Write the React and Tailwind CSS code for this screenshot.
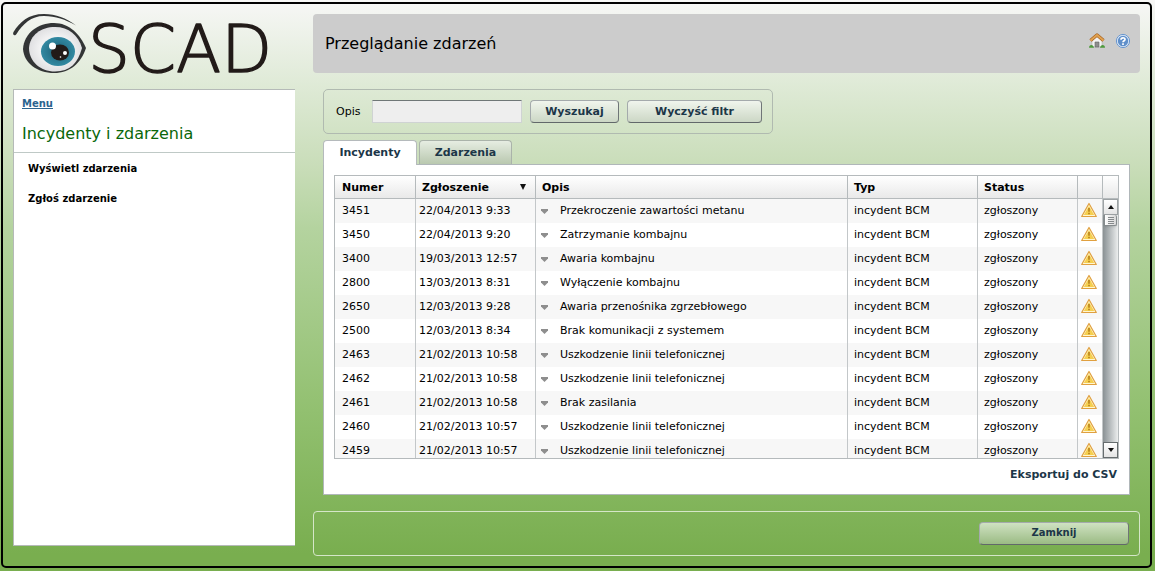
import { useState } from 'react'

const INCIDENTS = [
  { number: '3451', reported: '22/04/2013 9:33', description: 'Przekroczenie zawartości metanu' },
  { number: '3450', reported: '22/04/2013 9:20', description: 'Zatrzymanie kombajnu' },
  { number: '3400', reported: '19/03/2013 12:57', description: 'Awaria kombajnu' },
  { number: '2800', reported: '13/03/2013 8:31', description: 'Wyłączenie kombajnu' },
  { number: '2650', reported: '12/03/2013 9:28', description: 'Awaria przenośnika zgrzebłowego' },
  { number: '2500', reported: '12/03/2013 8:34', description: 'Brak komunikacji z systemem' },
  { number: '2463', reported: '21/02/2013 10:58', description: 'Uszkodzenie linii telefonicznej' },
  { number: '2462', reported: '21/02/2013 10:58', description: 'Uszkodzenie linii telefonicznej' },
  { number: '2461', reported: '21/02/2013 10:58', description: 'Brak zasilania' },
  { number: '2460', reported: '21/02/2013 10:57', description: 'Uszkodzenie linii telefonicznej' },
  { number: '2459', reported: '21/02/2013 10:57', description: 'Uszkodzenie linii telefonicznej' },
]

function Logo() {
  return (
    <svg className="block h-[75px] w-full overflow-visible" viewBox="0 0 282 75" role="img" aria-label="OSCAD">
      <defs>
        <radialGradient id="eyeball">
          <stop offset="0.6" stopColor="#f1f1f2" />
          <stop offset="1" stopColor="#e0e0e2" />
        </radialGradient>
        <radialGradient id="iris">
          <stop offset="0.4" stopColor="#256f86" />
          <stop offset="1" stopColor="#3289a2" />
        </radialGradient>
      </defs>
      <path
        d="M0.500 18C7 8 15 0 31 0C43 0 53 4 63 11.500C52 5.500 43 2 31 2C18 2 10 10 3.500 20C2 22.500 -1 21 0.500 18Z"
        fill="#333536"
      />
      <path
        d="M10 35C11 19 25 9 41 9C56 9 67 20 73 34C68 49 57 59 41 59C24 59 11 49 10 35Z"
        fill="#333536"
      />
      <path
        d="M16 34C17 21 28 13 42 13C56 13 65 21 69 34C65 49 57 57.500 42 57.500C27 57.500 16 47 16 34Z"
        fill="url(#eyeball)"
      />
      <ellipse cx="45" cy="37.500" rx="17" ry="14.500" fill="url(#iris)" />
      <ellipse cx="47" cy="38.500" rx="9" ry="8" fill="#221b19" />
      <circle cx="39.500" cy="32" r="3.500" fill="#fff" />
      <circle cx="52" cy="39" r="2" fill="#fff" />
      <circle cx="47.500" cy="43" r="0.800" fill="#fff" />
      <text
        x="75"
        y="58"
        fontSize="66"
        fill="#221b19"
        stroke="#221b19"
        strokeWidth="1.500"
        strokeLinejoin="round"
        className="font-['DejaVu_Sans',sans-serif] font-extralight"
      >
        SCAD
      </text>
    </svg>
  )
}

function HomeIcon() {
  return (
    <svg width="16" height="16" viewBox="0 0 16 16" aria-hidden="true">
      <path d="M3 7.500L8 3L13 7.500V14H3Z" fill="#f3f3f3" stroke="#aaa" strokeWidth="0.500" />
      <path d="M6 9H10V14H6Z" fill="#8d8d8d" stroke="#666" strokeWidth="0.600" />
      <path d="M1.500 7.500L8 2L14.500 7.500" fill="none" stroke="#a96420" strokeWidth="3.400" strokeLinejoin="round" />
      <path d="M1.500 7.500L8 2L14.500 7.500" fill="none" stroke="#e0a252" strokeWidth="2" strokeLinejoin="round" />
      <path d="M0 14.800C0 11 4.500 11 5 14.800Z" fill="#4f9a3e" />
      <path d="M11 14.800C11.500 11 16 11 16 14.800Z" fill="#4f9a3e" />
    </svg>
  )
}

function HelpIcon() {
  return (
    <svg width="16" height="16" viewBox="0 0 16 16" aria-hidden="true">
      <circle cx="8" cy="8" r="6.600" fill="#dce8f6" stroke="#6a97cf" />
      <circle cx="8" cy="8" r="5.200" fill="#5f8fca" />
      <path
        d="M6 6.700C6 4.200 10 4.200 10 6.400C10 7.700 8 7.800 8 9.300M8 10.300V12"
        fill="none"
        stroke="#fff"
        strokeWidth="1.700"
      />
    </svg>
  )
}

function WarningIcon() {
  return (
    <svg className="mb-[3px] block" width="16" height="16" viewBox="0 0 16 16" role="img" aria-label="Ostrzeżenie">
      <path d="M8 1.500L15.300 14.500H0.700Z" fill="#fff6d0" stroke="#e0a040" strokeWidth="1.200" strokeLinejoin="round" />
      <path d="M8 4L13.200 13H2.800Z" fill="#f5cf50" />
      <path d="M8 6V9.800M8 10.800V12.300" stroke="#b8801a" strokeWidth="1.600" />
    </svg>
  )
}

function Button({ className = '', ...props }) {
  return (
    <button
      type="button"
      className={`rounded-[4px] border border-[#a4aaac] border-r-[#6f7577] border-b-[#62686a] font-bold text-[#1c3648] ${className}`}
      {...props}
    />
  )
}

function Sidebar() {
  return (
    <aside className="flex w-[282px] shrink-0 flex-col pb-[10px]">
      <Logo />
      <nav className="flex-1 border border-r-0 border-[#b5bab8] bg-white">
        <a href="#menu" className="mt-2 ml-2 inline-block text-[10px] leading-3 font-bold text-[#2b648f] underline">
          Menu
        </a>
        <h2 className="mt-3 border-b border-[#bfc9c6] pb-2 pl-2 text-[16px] leading-5 text-[#0a670a]">
          Incydenty i zdarzenia
        </h2>
        <ul className="grid gap-4 pt-[9px] pl-[14px] text-[10px] leading-[14px] font-bold">
          <li>
            <a href="#wyswietl">Wyświetl zdarzenia</a>
          </li>
          <li>
            <a href="#zglos">Zgłoś zdarzenie</a>
          </li>
        </ul>
      </nav>
    </aside>
  )
}

function SearchForm() {
  const [query, setQuery] = useState('')

  return (
    <form
      className="flex w-fit items-center gap-2 rounded-[5px] border border-[#b0bab0] px-[10px] py-[10px]"
      onSubmit={(event) => event.preventDefault()}
    >
      <label htmlFor="description-filter" className="w-[30px] pl-[2px]">
        Opis
      </label>
      <input
        id="description-filter"
        type="text"
        value={query}
        onChange={(event) => setQuery(event.target.value)}
        className="h-[23px] w-[150px] border border-[#cfd3d3] border-t-[#6f7777] bg-[#eee] px-1 outline-none"
      />
      <Button type="submit" className="h-[23px] w-[89px] bg-linear-to-b from-[#f0f5ed] to-[#ccd7c5]">
        Wyszukaj
      </Button>
      <Button
        className="h-[23px] w-[135px] bg-linear-to-b from-[#f0f5ed] to-[#ccd7c5]"
        onClick={() => setQuery('')}
      >
        Wyczyść filtr
      </Button>
    </form>
  )
}

function Scrollbar() {
  return (
    <div className="flex w-[15px] shrink-0 flex-col">
      <div className="h-[23px] shrink-0 border-b border-[#b5babc] bg-linear-to-b from-white to-[#e8e8e8]" />
      <button
        type="button"
        aria-label="Przewiń w górę"
        className="grid h-4 shrink-0 place-items-center border border-[#9da2a4] bg-linear-to-b from-white to-[#e4e4e4]"
      >
        <svg width="6" height="4" viewBox="0 0 6 4">
          <path d="M3 0L6 4H0Z" fill="#111" />
        </svg>
      </button>
      <div className="flex-1 border-l border-[#8e9496] bg-linear-to-r from-[#90979a] to-[#eceeee]">
        <div className="grid h-[11px] w-[13px] place-items-center rounded-r-[2px] border border-t-0 border-[#858b8d] bg-linear-to-r from-white to-[#d8d8d8] shadow-sm">
          <svg width="6" height="7" viewBox="0 0 6 7">
            <path d="M0 0.500H6M0 2.500H6M0 4.500H6M0 6.500H6" stroke="#85898b" />
          </svg>
        </div>
      </div>
      <button
        type="button"
        aria-label="Przewiń w dół"
        className="grid h-4 shrink-0 place-items-center border border-[#666c6e] bg-linear-to-b from-white to-[#e4e4e4]"
      >
        <svg width="6" height="4" viewBox="0 0 6 4">
          <path d="M0 0H6L3 4Z" fill="#111" />
        </svg>
      </button>
    </div>
  )
}

function IncidentTable() {
  return (
    <div className="flex h-[284px] overflow-hidden border border-[#b5babc]">
      <table className="min-w-0 flex-1 table-fixed border-separate border-spacing-0 self-start text-left">
        <colgroup>
          <col className="w-[81px]" />
          <col className="w-[120px]" />
          <col />
          <col className="w-[130px]" />
          <col className="w-[100px]" />
          <col className="w-[25px]" />
        </colgroup>
        <thead>
          <tr className="h-[23px] bg-linear-to-b from-white to-[#e8e8e8] *:border-r *:border-b *:border-[#b5babc] *:pt-[2px] *:pb-0">
            <th className="pl-[7px]">Numer</th>
            <th className="px-[6px]">
              <div className="flex items-center justify-between">
                Zgłoszenie
                <svg width="7" height="7" viewBox="0 0 7 7" className="mr-[2px] mb-px">
                  <path d="M0 0H6L3 6Z" fill="#111" />
                </svg>
              </div>
            </th>
            <th className="pl-[6px]">Opis</th>
            <th className="pl-[6px]">Typ</th>
            <th className="pl-[6px]">Status</th>
            <th aria-label="Ostrzeżenie" />
          </tr>
        </thead>
        <tbody>
          {INCIDENTS.map((incident) => (
            <tr
              key={incident.number}
              className="h-6 odd:bg-[#f7f7f7] even:bg-white *:border-r *:border-[#c3c7c9] *:py-0 *:whitespace-nowrap"
            >
              <td className="pl-[7px]">{incident.number}</td>
              <td className="pl-[3px]">{incident.reported}</td>
              <td className="pl-[5px]">
                <div className="flex items-center gap-3">
                  <svg width="7" height="5" viewBox="0 0 7 5" className="mt-px">
                    <path d="M0 0H7V1.500L3.500 5L0 1.500Z" fill="#8e8e8e" />
                  </svg>
                  {incident.description}
                </div>
              </td>
              <td className="pl-[6px]">incydent BCM</td>
              <td className="pl-[6px]">zgłoszony</td>
              <td className="pl-[3px]">
                <WarningIcon />
              </td>
            </tr>
          ))}
        </tbody>
      </table>
      <Scrollbar />
    </div>
  )
}

function App() {
  return (
    <div className="flex min-h-screen flex-col bg-[linear-gradient(to_bottom,#f7f7f6_0%,#dde9d4_16%,#c9ddb9_29%,#b4d39f_40%,#92c070_72%,#79ae4f_97%)] pt-[2px] pr-[3px] pb-[3px] pl-px font-['DejaVu_Sans',Verdana,sans-serif] text-[11px] leading-4 text-black">
      <div className="flex flex-1 gap-[18px] rounded-[5px] border-2 border-black p-[10px]">
        <Sidebar />

        <main className="flex min-w-0 flex-1 flex-col">
          <header className="flex h-[59px] items-center justify-between rounded-[4px] bg-[#ccc] pr-[9px] pl-3">
            <h1 className="text-[16px] leading-5">Przeglądanie zdarzeń</h1>
            <div className="flex gap-[10px] pb-[6px]">
              <a href="#home" aria-label="Strona główna">
                <HomeIcon />
              </a>
              <a href="#help" aria-label="Pomoc">
                <HelpIcon />
              </a>
            </div>
          </header>

          <div className="px-[10px] pt-4 pb-4">
            <SearchForm />

            <div className="mt-[6px] flex items-start gap-[2px]" role="tablist">
              <button
                type="button"
                role="tab"
                aria-selected="true"
                className="z-10 -mb-px h-[25px] w-[94px] rounded-t-[4px] border border-b-0 border-[#b5babc] bg-white font-bold text-[#1c3648]"
              >
                Incydenty
              </button>
              <button
                type="button"
                role="tab"
                aria-selected="false"
                className="h-6 w-[93px] rounded-t-[4px] border border-b-0 border-[#aab3aa] bg-linear-to-b from-[#e6ede2] to-[#b9c8af] font-bold text-[#1c3648]"
              >
                Zdarzenia
              </button>
            </div>

            <section className="border border-[#b0b7b9] bg-white px-[10px] pt-[10px] pb-[11px]">
              <IncidentTable />
              <div className="mt-2 pr-[2px] text-right">
                <button type="button" className="font-bold text-[#1c3648]">
                  Eksportuj do CSV
                </button>
              </div>
            </section>
          </div>

          <footer className="flex justify-end rounded-[4px] border border-[#d5e6c8] p-[10px]">
            <Button className="h-[23px] w-[150px] bg-linear-to-b from-[#cfe2c2] to-[#9bbb84] pb-[2px] text-[10px]">
              Zamknij
            </Button>
          </footer>
        </main>
      </div>
    </div>
  )
}

export default App
